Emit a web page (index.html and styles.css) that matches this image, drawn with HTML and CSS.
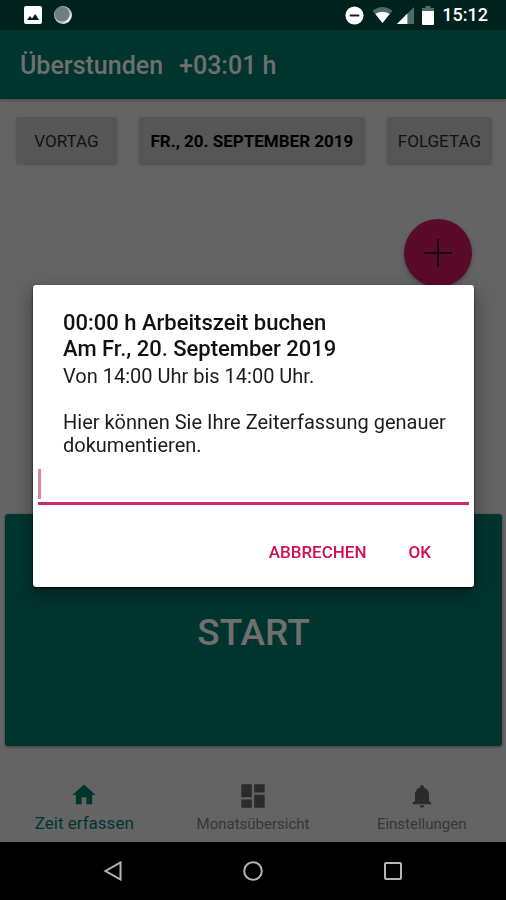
FILE: index.html
```html
<!DOCTYPE html>
<html lang="de">
<head>
<meta charset="utf-8">
<meta name="viewport" content="width=device-width, initial-scale=1">
<title>Überstunden</title>
<link rel="stylesheet" href="styles.css">
</head>
<body>
<div class="status">
  <svg class="status-icon" viewBox="0 0 18 18" width="18" height="18" aria-hidden="true"><rect width="18" height="18" rx="2" fill="#fff"/><path d="M3 14l3-4 2 2.500 3.200-4.500 3.800 6z" fill="#001a17"/></svg>
  <svg class="status-icon" viewBox="0 0 18 18" width="18" height="18" aria-hidden="true"><circle cx="9" cy="9" r="9" fill="#b9c6c4"/><circle cx="8" cy="8" r="7.500" fill="#6c807d"/><path d="M17.300 7A9 9 0 0 1 8 17.800Q15 15 17.300 7z" fill="#eef2f1"/></svg>
  <span class="spacer"></span>
  <svg viewBox="0 0 20 20" width="19" height="19" aria-hidden="true"><circle cx="10" cy="10" r="9.500" fill="#fff"/><rect x="5" y="9" width="10" height="2" fill="#00211e"/></svg>
  <svg class="wifi" viewBox="0 0 22 18" width="21" height="18" aria-hidden="true"><path d="M0.500 4.500Q11-3.500 21.500 4.500L11 17.500z" fill="#4d6b67"/><path d="M3.500 8Q11 3 18.500 8L11 17.500z" fill="#fff"/></svg>
  <svg class="signal" viewBox="0 0 18 18" width="17" height="17" aria-hidden="true"><path d="M0 18L18 0V18z" fill="#4d6b67"/><path d="M0 18L11 7V18z" fill="#fff"/></svg>
  <svg class="battery" viewBox="0 0 12 19" width="12" height="19" aria-hidden="true"><path d="M3.500 0h5v2H12v4H0V2h3.500z" fill="#4d6b67"/><path d="M0 5h12v13a1 1 0 0 1-1 1H1a1 1 0 0 1-1-1z" fill="#fff"/></svg>
  <time class="clock">15:12</time>
</div>
<header class="appbar">
  <h1>Überstunden</h1>
  <span>+03:01 h</span>
</header>
<main class="content">
  <div class="days">
    <button type="button" class="day">VORTAG</button>
    <button type="button" class="day day-current">FR., 20. SEPTEMBER 2019</button>
    <button type="button" class="day">FOLGETAG</button>
  </div>
  <button type="button" class="fab" aria-label="Hinzufügen"><svg viewBox="0 0 30 30" width="30" height="30"><path d="M15 1v28M1 15h28" stroke="#1d030c" stroke-width="2"/></svg></button>
  <button type="button" class="start">START</button>
</main>
<nav class="tabs">
  <a href="#zeit" class="tab tab-active">
    <svg viewBox="0 0 24 24" width="28" height="28" aria-hidden="true"><path d="M10 20v-6h4v6h5v-8h3L12 3 2 12h3v8z"/></svg>
    <span>Zeit erfassen</span>
  </a>
  <a href="#monat" class="tab">
    <svg viewBox="0 0 24 24" width="28" height="28" aria-hidden="true"><path d="M2 13h9V2H2v11zm0 9h9v-7H2v7zm11 0h9V11h-9v11zm0-20v7h9V2h-9z"/></svg>
    <span>Monatsübersicht</span>
  </a>
  <a href="#einstellungen" class="tab">
    <svg viewBox="0 0 24 24" width="28" height="28" aria-hidden="true"><path d="M12 22c1.100 0 2-.9 2-2h-4c0 1.100.9 2 2 2zm6-6v-5c0-3.070-1.640-5.640-4.500-6.320V4c0-.83-.67-1.500-1.500-1.500s-1.500.67-1.500 1.500v.68C7.630 5.360 6 7.920 6 11v5l-2 2v1h16v-1l-2-2z"/></svg>
    <span>Einstellungen</span>
  </a>
</nav>
<div class="system">
  <button type="button" aria-label="Zurück"><svg viewBox="0 0 20 20" width="20" height="20"><path d="M17.500 1.500v17L2.500 10z"/></svg></button>
  <button type="button" aria-label="Startbildschirm"><svg viewBox="0 0 20 20" width="20" height="20"><circle cx="10" cy="10" r="8.800"/></svg></button>
  <button type="button" aria-label="Übersicht"><svg viewBox="0 0 20 20" width="20" height="20"><rect x="2" y="2" width="16" height="16" rx="1"/></svg></button>
</div>
<div class="overlay">
  <form class="dialog" role="dialog" aria-labelledby="dialog-title">
    <h2 id="dialog-title">00:00 h Arbeitszeit buchen<br>Am Fr., 20. September 2019</h2>
    <label for="note">Von 14:00 Uhr bis 14:00 Uhr.<br><br>Hier können Sie Ihre Zeiterfassung genauer dokumentieren.</label>
    <div class="field">
      <span class="caret"></span>
      <input id="note" type="text">
    </div>
    <div class="actions">
      <button type="button">ABBRECHEN</button>
      <button type="button">OK</button>
    </div>
  </form>
</div>
</body>
</html>
```
FILE: styles.css
```css
* { box-sizing: border-box; }
body {
  margin: 0;
  min-height: 100vh;
  display: flex;
  flex-direction: column;
  background: #646464;
  font-family: Roboto, "Liberation Sans", sans-serif;
}
button {
  font-family: inherit;
  border: 0;
  padding: 0;
}
svg { display: block; }

.status {
  height: 30px;
  display: flex;
  align-items: center;
  padding: 0 18px 0 24px;
  background: #00221f;
}
.status-icon { margin-right: 12px; }
.spacer { flex: 1; }
.wifi { margin-left: 8px; }
.signal { margin-left: 4px; }
.battery { margin: 0 8px; }
.clock {
  color: #fff;
  font-size: 18px;
  font-weight: 500;
  line-height: 30px;
}

.appbar {
  height: 69px;
  display: flex;
  align-items: center;
  gap: 16px;
  padding: 2px 20px 0;
  background: #00352f;
  color: #6f6f6f;
  font-size: 25px;
  font-weight: 500;
  box-shadow: 0 1px 3px rgba(0, 0, 0, 0.3);
}
.appbar h1 {
  margin: 0;
  font-size: inherit;
  font-weight: inherit;
}

.content {
  flex: 1;
  display: flex;
  flex-direction: column;
  padding: 18px 4px 26px 5px;
}
.days {
  display: flex;
  justify-content: space-between;
  padding: 0 10px 0 11px;
}
.day {
  height: 47px;
  padding: 0 11px;
  min-width: 101px;
  border-radius: 3px;
  background: #565656;
  color: #111;
  font-size: 17px;
  box-shadow: 0 1px 2px rgba(0, 0, 0, 0.2);
}
.day-current {
  padding: 0 12px;
  color: #000;
  font-weight: 700;
}
.fab {
  width: 68px;
  height: 68px;
  margin: 55px 30px 0 0;
  align-self: flex-end;
  display: grid;
  place-items: center;
  border-radius: 50%;
  background: #5a0b29;
  box-shadow: 0 2px 4px rgba(0, 0, 0, 0.3);
}
.start {
  height: 232px;
  margin-top: auto;
  padding-top: 4px;
  border-radius: 3px;
  background: #00352f;
  color: #6f6f6f;
  font-size: 37px;
  font-weight: 500;
  box-shadow: 0 1px 3px rgba(0, 0, 0, 0.4);
}

.tabs {
  height: 70px;
  display: grid;
  grid-template-columns: repeat(3, 1fr);
}
.tab {
  display: flex;
  flex-direction: column;
  align-items: center;
  justify-content: flex-end;
  gap: 4px;
  padding-bottom: 8px;
  color: #363636;
  fill: #2b2b2b;
  font-size: 15px;
  line-height: 20px;
  text-decoration: none;
}
.tab-active {
  padding-bottom: 9px;
  color: #00352f;
  fill: #00352f;
  font-size: 17px;
}

.system {
  height: 58px;
  display: flex;
  align-items: center;
  justify-content: center;
  gap: 120px;
  background: #000;
}
.system button {
  background: none;
}
.system svg {
  fill: none;
  stroke: #b5b5b5;
  stroke-width: 2;
}

.overlay {
  position: fixed;
  inset: 0;
  display: flex;
  align-items: center;
  padding: 30px 32px 58px 33px;
}
.dialog {
  flex: 1;
  padding: 25px 0 8px;
  border-radius: 3px;
  background: #fff;
  color: #1c1c1c;
  box-shadow: 0 1px 2px #000, 0 8px 20px rgba(0, 0, 0, 0.4);
}
.dialog h2 {
  margin: 0 30px 3px;
  color: #111;
  font-size: 22px;
  font-weight: 500;
  line-height: 26px;
}
.dialog label {
  display: block;
  margin: 0 20px 0 30px;
  font-size: 20px;
  line-height: 23px;
}
.field {
  height: 48px;
  display: flex;
  align-items: flex-end;
  margin: 0 5px;
  padding-bottom: 3px;
  border-bottom: 3px solid #c92e66;
}
.caret {
  width: 3px;
  height: 30px;
  background: #e0849f;
}
.field input {
  flex: 1;
  min-width: 0;
  height: 30px;
  padding: 0 20px;
  border: 0;
  outline: 0;
  background: none;
  font: inherit;
  font-size: 20px;
}
.actions {
  display: flex;
  justify-content: flex-end;
  gap: 22px;
  padding: 23px 33px 3px;
}
.actions button {
  height: 48px;
  padding: 0 10px;
  background: none;
  color: #d0104c;
  font-size: 17px;
  font-weight: 500;
}
```
